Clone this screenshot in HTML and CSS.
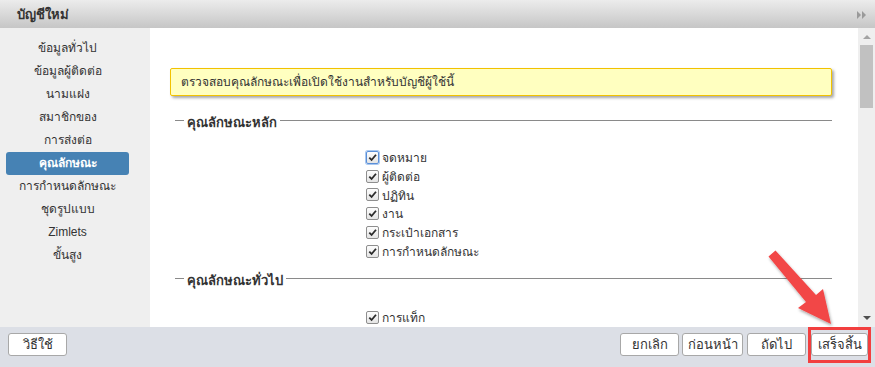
FILE: index.html
```html
<!DOCTYPE html>
<html lang="th">
<head>
<meta charset="utf-8">
<link rel="stylesheet" href="styles.css">
</head>
<body>
<div class="dialog">
  <div class="titlebar">
    <span class="title">บัญชีใหม่</span>
    <svg class="collapse" width="10" height="8" viewBox="0 0 10 8"><path d="M0 0L4 4L0 8Z M5 0L9 4L5 8Z" fill="#9a9a9a"/></svg>
  </div>
  <div class="main">
    <nav class="sidebar">
      <div class="nav-item">ข้อมูลทั่วไป</div>
      <div class="nav-item">ข้อมูลผู้ติดต่อ</div>
      <div class="nav-item">นามแฝง</div>
      <div class="nav-item">สมาชิกของ</div>
      <div class="nav-item">การส่งต่อ</div>
      <div class="nav-item selected">คุณลักษณะ</div>
      <div class="nav-item">การกำหนดลักษณะ</div>
      <div class="nav-item">ชุดรูปแบบ</div>
      <div class="nav-item">Zimlets</div>
      <div class="nav-item">ขั้นสูง</div>
    </nav>
    <section class="content">
      <div class="notice">ตรวจสอบคุณลักษณะเพื่อเปิดใช้งานสำหรับบัญชีผู้ใช้นี้</div>
      <div class="legend">คุณลักษณะหลัก</div>
      <ul class="checks">
        <li><span class="cb focus"><svg viewBox="0 0 12 12"><path d="M2.5 6.2L5 8.7L9.8 3" /></svg></span>จดหมาย</li>
        <li><span class="cb"><svg viewBox="0 0 12 12"><path d="M2.5 6.2L5 8.7L9.8 3" /></svg></span>ผู้ติดต่อ</li>
        <li><span class="cb"><svg viewBox="0 0 12 12"><path d="M2.5 6.2L5 8.7L9.8 3" /></svg></span>ปฏิทิน</li>
        <li><span class="cb"><svg viewBox="0 0 12 12"><path d="M2.5 6.2L5 8.7L9.8 3" /></svg></span>งาน</li>
        <li><span class="cb"><svg viewBox="0 0 12 12"><path d="M2.5 6.2L5 8.7L9.8 3" /></svg></span>กระเป๋าเอกสาร</li>
        <li><span class="cb"><svg viewBox="0 0 12 12"><path d="M2.5 6.2L5 8.7L9.8 3" /></svg></span>การกำหนดลักษณะ</li>
      </ul>
      <div class="legend second">คุณลักษณะทั่วไป</div>
      <ul class="checks second-list">
        <li><span class="cb"><svg viewBox="0 0 12 12"><path d="M2.5 6.2L5 8.7L9.8 3" /></svg></span>การแท็ก</li>
      </ul>
    </section>
    <div class="scrollbar">
      <span class="arrow up"></span>
      <span class="thumb"></span>
      <span class="track"></span>
      <span class="arrow down"></span>
    </div>
  </div>
  <div class="footer">
    <button class="btn help">วิธีใช้</button>
    <div class="actions">
      <button class="btn w58">ยกเลิก</button>
      <button class="btn w60">ก่อนหน้า</button>
      <button class="btn w59">ถัดไป</button>
      <button class="btn w56">เสร็จสิ้น</button>
    </div>
  </div>
  <div class="highlight"></div>
  <svg class="pointer" width="875" height="367" viewBox="0 0 875 367">
    <defs>
      <filter id="sh" x="-20%" y="-20%" width="140%" height="140%">
        <feDropShadow dx="1" dy="2" stdDeviation="1.5" flood-color="#000" flood-opacity="0.35"/>
      </filter>
    </defs>
    <g filter="url(#sh)" fill="#f24646">
      <path d="M768.5 256.5 L775.5 250.5 L816 295 L823 289 L831 324 L798 308 L806 302 Z"/>
    </g>
  </svg>
</div>
</body>
</html>
```

FILE: styles.css
```css
* { box-sizing: border-box; }
html, body { margin: 0; padding: 0; }
body {
  width: 875px;
  height: 367px;
  overflow: hidden;
  font-family: Tahoma, "Liberation Sans", "Noto Sans", "DejaVu Sans", sans-serif;
  font-size: 12px;
  color: #333;
  background: #fff;
}
.dialog {
  position: relative;
  width: 875px;
  height: 367px;
  display: flex;
  flex-direction: column;
}
.titlebar {
  height: 28px;
  flex: none;
  display: flex;
  align-items: center;
  justify-content: space-between;
  padding: 0 8px 0 17px;
  background: linear-gradient(#ececec, #c6c6c6);
}
.title {
  font-weight: bold;
  font-size: 13px;
  color: #333;
}
.collapse { margin-top: 2px; }
.main {
  flex: 1;
  display: flex;
  min-height: 0;
}
.sidebar {
  width: 150px;
  flex: none;
  background: #efefef;
  padding: 9px 0 0 6px;
}
.nav-item {
  width: 123px;
  height: 23px;
  line-height: 23px;
  text-align: center;
  color: #333;
  border-radius: 3px;
}
.nav-item.selected {
  background: #4682b4;
  color: #fff;
  font-weight: bold;
}
.content {
  flex: 1;
  min-width: 0;
  overflow: hidden;
  padding: 40px 26px 0 20px;
  background: #fff;
}
.notice {
  height: 28px;
  line-height: 26px;
  padding-left: 10px;
  background: #ffffc0;
  border: 1px solid #f2c200;
  border-radius: 2px;
  box-shadow: 2px 2px 3px rgba(0,0,0,0.35);
  color: #333;
}
.legend {
  display: flex;
  align-items: center;
  margin: 16px 0 0 5px;
  height: 20px;
  font-weight: bold;
  font-size: 13px;
  color: #333;
}
.legend::before {
  content: "";
  width: 9px;
  height: 1px;
  background: #8a8a8a;
  margin-right: 3px;
  margin-top: -4px;
}
.legend::after {
  content: "";
  flex: 1;
  height: 1px;
  background: #8a8a8a;
  margin-left: 3px;
  margin-top: -4px;
}
.legend.second { margin-top: 10px; }
.checks {
  list-style: none;
  margin: 16px 0 0 196px;
  padding: 0;
}
.checks li {
  display: flex;
  align-items: center;
  height: 18.8px;
  color: #333;
}
.second-list { margin-top: 17px; }
.cb {
  width: 13px;
  height: 13px;
  margin-right: 3px;
  border: 1px solid #8e8e8e;
  border-radius: 2px;
  background: linear-gradient(#fdfdfd, #e4e4e4);
  display: flex;
  align-items: center;
  justify-content: center;
  flex: none;
}
.cb.focus {
  border-color: #5a8fd8;
  box-shadow: 0 0 0 1px #a9c8f0;
}
.cb svg {
  width: 11px;
  height: 11px;
  fill: none;
  stroke: #2b2b2b;
  stroke-width: 2;
}
.scrollbar {
  width: 17px;
  flex: none;
  background: #efefef;
  display: flex;
  flex-direction: column;
  align-items: center;
}
.arrow {
  width: 0;
  height: 0;
  border-left: 4px solid transparent;
  border-right: 4px solid transparent;
}
.arrow.up {
  border-bottom: 4px solid #a3a3a3;
  margin-top: 7px;
}
.thumb {
  width: 13px;
  height: 63px;
  background: #c1c1c1;
  margin-top: 6px;
}
.track { flex: 1; }
.arrow.down {
  border-top: 4px solid #505050;
  margin-bottom: 7px;
}
.footer {
  height: 40px;
  flex: none;
  background: #dcdfe6;
  display: flex;
  align-items: flex-start;
  justify-content: space-between;
  padding: 6px 7px 0 8px;
}
.actions {
  display: flex;
  gap: 3px;
}
.btn {
  height: 23px;
  padding: 0;
  white-space: nowrap;
  font-family: inherit;
  font-size: 13px;
  color: #333;
  background: #fff;
  border: 1px solid #a8a8a8;
  border-radius: 3px;
}
.help { width: 59px; }
.w58 { width: 59px; }
.w60 { width: 61px; }
.w59 { width: 59px; margin-left: 1px; }
.w56 { width: 57px; margin-left: 2px; }
.highlight {
  position: absolute;
  left: 808px;
  top: 327px;
  width: 63px;
  height: 36px;
  border: 3px solid #f23f3f;
}
.pointer {
  position: absolute;
  left: 0;
  top: 0;
  pointer-events: none;
}
```
